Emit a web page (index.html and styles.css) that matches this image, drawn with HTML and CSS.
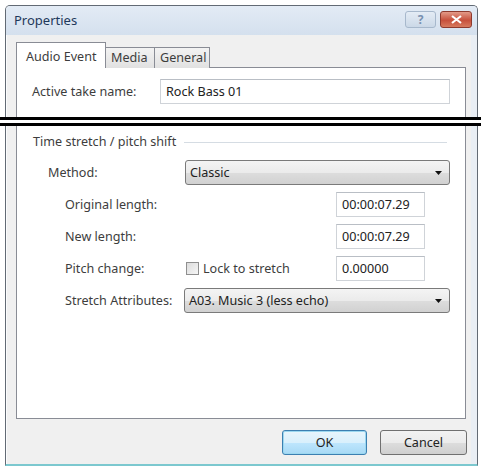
FILE: index.html
```html
<!DOCTYPE html>
<html lang="en">
<head>
	<meta charset="UTF-8">
	<title>Properties</title>
	<link rel="stylesheet" href="styles.css">
</head>
<body>

<div class="window">
	<div class="titlebar">
		<span class="title">Properties</span>
		<div class="caption-buttons">
			<div class="cap-btn help">?</div>
			<div class="cap-btn close">
				<svg width="11" height="9" viewBox="0 0 11 9"><path d="M1 1 L10 8 M10 1 L1 8" stroke="#fff" stroke-width="2.2"/></svg>
			</div>
		</div>
	</div>

	<div class="client">
		<div class="tabs">
			<div class="tab active">Audio Event</div>
			<div class="tab">Media</div>
			<div class="tab">General</div>
		</div>

		<div class="panel">
			<div class="row take-row">
				<span class="label take-label">Active take name:</span>
				<div class="textbox take-box">Rock Bass 01</div>
			</div>

			<div class="group-title">
				<span>Time stretch / pitch shift</span>
				<div class="group-line"></div>
			</div>

			<div class="form">
				<div class="row outer">
					<span class="label method-label">Method:</span>
					<div class="combo method-combo">
						<span>Classic</span>
						<svg width="7" height="4" viewBox="0 0 7 4"><path d="M0 0 H7 L3.5 4 Z" fill="#111"/></svg>
					</div>
				</div>
				<div class="row inner">
					<span class="label len-label">Original length:</span>
					<div class="textbox num-box">00:00:07.29</div>
				</div>
				<div class="row inner">
					<span class="label len-label">New length:</span>
					<div class="textbox num-box">00:00:07.29</div>
				</div>
				<div class="row inner">
					<span class="label pitch-label">Pitch change:</span>
					<div class="check-group">
						<span class="checkbox"></span>
						<span>Lock to stretch</span>
					</div>
					<div class="textbox num-box">0.00000</div>
				</div>
				<div class="row inner">
					<span class="label stretch-label">Stretch Attributes:</span>
					<div class="combo stretch-combo">
						<span>A03. Music 3 (less echo)</span>
						<svg width="7" height="4" viewBox="0 0 7 4"><path d="M0 0 H7 L3.5 4 Z" fill="#111"/></svg>
					</div>
				</div>
			</div>
		</div>

		<div class="buttons">
			<div class="btn ok">OK</div>
			<div class="btn">Cancel</div>
		</div>
	</div>
</div>

<!-- the double rule drawn across the screenshot -->
<div class="double-rule"></div>

</body>
</html>
```

FILE: styles.css
```css
:root {
	--text: #3d3d3d;
	--tab-border: #898c95;
	--box-border: #cfd3d8;
	font-family: "Noto Sans", "Open Sans", sans-serif;
	font-size: 12.6px;
}

body {
	margin: 0;
	background: #fff;
	color: var(--text);
}

.window {
	margin: 5px 0 0 5px;
	width: 473px;
	height: 461px;
	box-sizing: border-box;
	border: 1px solid #626a74;
	border-bottom: 2px solid #7cc8cf;
	border-radius: 5px 5px 0 0;
	background: #f0f0f0;
	box-shadow: inset 1px 0 0 #fbfcfd, inset -6px 0 0 #e9eef4;
	display: flex;
	flex-direction: column;
	position: relative;
}

.titlebar {
	height: 29px;
	display: flex;
	align-items: flex-start;
	justify-content: space-between;
	padding: 0 5px 0 8px;
	background: linear-gradient(#e3ebf5, #d4e0ee);
	border-radius: 4px 4px 0 0;
}

.title {
	font-size: 13px;
	color: #1e395b;
	line-height: 29px;
}

.caption-buttons {
	display: flex;
	gap: 4px;
	margin-top: 5px;
}

.cap-btn {
	height: 17px;
	box-sizing: border-box;
	border-radius: 3px;
	display: flex;
	align-items: center;
	justify-content: center;
}

.help {
	width: 31px;
	border: 1px solid #a7b8cc;
	background: linear-gradient(#e4ecf5, #cbd8e7);
	color: #7891b0;
	font-weight: bold;
	font-size: 12px;
}

.close {
	width: 32px;
	border: 1px solid #8e3a2e;
	background: linear-gradient(#e39a88, #c7503c 55%, #d77a5e);
}

.client {
	flex: 1;
	padding: 7px 11px 0 10px;
	display: flex;
	flex-direction: column;
}

.tabs {
	display: flex;
	align-items: flex-end;
	height: 26px;
	margin-bottom: -1px;
	position: relative;
	z-index: 1;
}

.tab {
	height: 21px;
	box-sizing: border-box;
	padding: 0 5px;
	border: 1px solid var(--tab-border);
	border-bottom: none;
	border-left: none;
	background: linear-gradient(#f3f3f3, #e1e1e1);
	line-height: 20px;
}

.tab.active {
	height: 26px;
	width: 90px;
	border-left: 1px solid var(--tab-border);
	background: #fff;
	padding: 0 0 0 9px;
	line-height: 27px;
}

.tab:nth-child(2) {
	width: 49px;
}

.tab:nth-child(3) {
	width: 55px;
}

.panel {
	height: 352px;
	box-sizing: border-box;
	border: 1px solid var(--tab-border);
	background: #fff;
	padding: 11px 15px 0 15px;
}

.row {
	display: flex;
	align-items: center;
	height: 25px;
}

.textbox {
	height: 25px;
	box-sizing: border-box;
	border: 1px solid var(--box-border);
	border-top-color: #b9bec5;
	padding-left: 5px;
	line-height: 23px;
	color: #222;
	background: #fff;
}

.take-label {
	width: 128px;
}

.take-box {
	width: 290px;
}

.group-title {
	display: flex;
	align-items: center;
	margin-top: 31px;
	padding-left: 1px;
	height: 13px;
}

.group-line {
	flex: 1;
	height: 1px;
	background: #d5dce3;
	margin: 1px 3px 0 8px;
}

.form {
	margin-top: 12px;
	display: flex;
	flex-direction: column;
	gap: 7px;
}

.row.outer {
	padding-left: 16px;
}

.row.inner {
	padding-left: 33px;
}

.method-label {
	width: 137px;
}

.stretch-label {
	width: 119px;
}

.len-label {
	width: 271px;
}

.pitch-label {
	width: 121px;
}

.combo {
	height: 25px;
	box-sizing: border-box;
	border: 1px solid #7a7a7a;
	border-radius: 3px;
	background: linear-gradient(#f4f4f4, #ebebeb 50%, #dddddd 51%, #d1d1d1);
	display: flex;
	align-items: center;
	justify-content: space-between;
	padding: 0 7px 0 4px;
	color: #222;
}

.method-combo {
	width: 265px;
}

.stretch-combo {
	width: 266px;
}

.num-box {
	width: 89px;
}

.check-group {
	width: 150px;
	display: flex;
	align-items: center;
	gap: 4px;
}

.checkbox {
	width: 13px;
	height: 13px;
	box-sizing: border-box;
	border: 1px solid #8f8f8f;
	background: linear-gradient(135deg, #dcdcdc, #f6f6f6);
}

.buttons {
	display: flex;
	justify-content: flex-end;
	gap: 13px;
	padding-top: 11px;
	margin-right: -1px;
}

.btn {
	width: 87px;
	height: 25px;
	box-sizing: border-box;
	border: 1px solid #707070;
	border-radius: 3px;
	background: linear-gradient(#f2f2f2, #ebebeb 50%, #dddddd 51%, #cfcfcf);
	text-align: center;
	line-height: 23px;
	color: #222;
}

.btn.ok {
	width: 85px;
	border-color: #3c7fb1;
	background: linear-gradient(#e8f5fc, #d9f0fc 50%, #bee6fd 51%, #a7d9f5);
	box-shadow: inset 0 0 0 1px #9cd8f0;
}

.double-rule {
	position: absolute;
	left: 0;
	top: 117px;
	width: 481px;
	height: 9px;
	box-sizing: border-box;
	border-top: 3px solid #000;
	border-bottom: 3px solid #000;
	background: #fff;
}
```
